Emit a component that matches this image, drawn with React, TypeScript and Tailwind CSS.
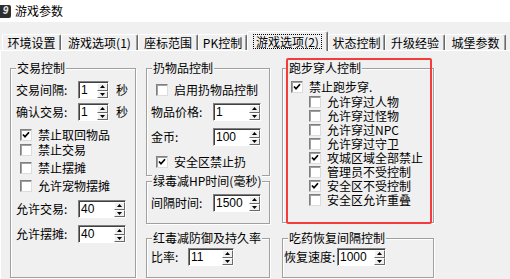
import type { ReactNode } from "react";

const Check = ({ checked }: { checked?: boolean }) => (
  <span className="w-[12px] h-[12px] shrink-0 bg-white border border-t-[#808080] border-l-[#808080] border-r-[#dcdcdc] border-b-[#dcdcdc] shadow-[inset_1px_1px_0_#a0a0a0] flex items-center justify-center">
    {checked && (
      <svg width="8" height="8" viewBox="0 0 8 8">
        <path d="M1 3.5 L3 5.8 L7 1.2" stroke="#000" strokeWidth="1.7" fill="none" />
      </svg>
    )}
  </span>
);

const CheckRow = ({
  label,
  checked,
  className,
}: {
  label: string;
  checked?: boolean;
  className: string;
}) => (
  <div className={`h-[14px] flex items-center ${className}`}>
    <Check checked={checked} />
    <span className="ml-[6px] leading-[14px] whitespace-nowrap">{label}</span>
  </div>
);

const Arrow = ({ up }: { up?: boolean }) => (
  <div className="flex-1 bg-[#f0f0f0] border border-t-white border-l-white border-r-[#696969] border-b-[#696969] flex items-center justify-center">
    <svg width="5" height="3" viewBox="0 0 5 3">
      <path d={up ? "M2.5 0 L5 3 L0 3 Z" : "M0 0 L5 0 L2.5 3 Z"} fill="#000" />
    </svg>
  </div>
);

const Spin = ({ value, w }: { value: string; w: string }) => (
  <div
    className={`${w} h-[18px] shrink-0 flex bg-white border border-t-[#808080] border-l-[#808080] border-r-white border-b-white shadow-[inset_1px_1px_0_#404040]`}
  >
    <div className="flex-1 pl-[2px] pt-[1px] leading-[15px] font-['Liberation_Sans',sans-serif] text-[12px]">
      {value}
    </div>
    <div className="w-[11px] flex flex-col pt-[1px]">
      <Arrow up />
      <Arrow />
    </div>
  </div>
);

const Group = ({
  title,
  className,
  children,
}: {
  title: string;
  className: string;
  children?: ReactNode;
}) => (
  <div
    className={`relative flex flex-col border border-[#a0a0a0] shadow-[inset_1px_1px_0_#fff,1px_1px_0_#fff] ${className}`}
  >
    <span className="absolute left-[5px] top-[-8px] px-[1px] bg-[#f0f0f0] leading-[14px] whitespace-nowrap">
      {title}
    </span>
    {children}
  </div>
);

const tabs = [
  { label: "环境设置", w: "w-[59px]" },
  { label: "游戏选项(1)", w: "w-[77px]" },
  { label: "座标范围", w: "w-[60px]" },
  { label: "PK控制", w: "w-[49px]" },
  { label: "游戏选项(2)", w: "w-[81px]", active: true },
  { label: "状态控制", w: "w-[57px]" },
  { label: "升级经验", w: "w-[60px]" },
  { label: "城堡参数", w: "w-[61px]" },
];

const runRows = [
  { label: "允许穿过人物" },
  { label: "允许穿过怪物" },
  { label: "允许穿过NPC" },
  { label: "允许穿过守卫" },
  { label: "攻城区域全部禁止", checked: true },
  { label: "管理员不受控制" },
  { label: "安全区不受控制", checked: true },
  { label: "安全区允许重叠" },
];

export default function App() {
  return (
    <div className="w-[510px] h-[279px] overflow-hidden bg-[#f0f0f0] text-[12px] text-black font-['Noto_Sans_CJK_SC','Noto_Sans',sans-serif]">
      <div className="h-[22px] bg-white flex items-center">
        <div className="w-[11px] h-[13px] bg-[#2e2e2e] rounded-r-[2px] flex items-center justify-center text-[10px] font-bold italic text-[#e8e8e8] font-['Liberation_Sans',sans-serif] leading-none">
          9
        </div>
        <span className="ml-[4px] text-[12px] leading-[14px]">游戏参数</span>
      </div>

      <div className="h-[28px] flex items-end pl-[2px]">
        {tabs.map((t) =>
          t.active ? (
            <div
              key={t.label}
              className={`${t.w} h-[20px] -mb-px relative z-10 bg-[#f0f0f0] border-t border-l border-white border-r border-r-[#696969] shadow-[inset_-1px_0_0_#a0a0a0] rounded-t-[2px] flex items-start justify-center pt-[2px]`}
            >
              <span className="border border-dotted border-black px-[2px] leading-[13px] whitespace-nowrap">
                {t.label}
              </span>
            </div>
          ) : (
            <div
              key={t.label}
              className={`${t.w} h-[16px] border-t border-l border-white border-r border-r-[#696969] shadow-[inset_-1px_0_0_#a0a0a0] rounded-t-[2px] flex items-center justify-center leading-[14px] whitespace-nowrap`}
            >
              {t.label}
            </div>
          )
        )}
      </div>

      <div className="h-[229px] border-t border-l border-white flex pl-[9px] pt-[17px]">
        <Group title="交易控制" className="w-[126px] h-[210px] shrink-0">
          <div className="mt-[12px] h-[18px] flex items-center">
            <span className="w-[67px] pl-[5px] whitespace-nowrap">交易间隔:</span>
            <Spin value="1" w="w-[31px]" />
            <span className="ml-[7px]">秒</span>
          </div>
          <div className="mt-[4px] h-[18px] flex items-center">
            <span className="w-[67px] pl-[5px] whitespace-nowrap">确认交易:</span>
            <Spin value="1" w="w-[31px]" />
            <span className="ml-[7px]">秒</span>
          </div>
          <CheckRow label="禁止取回物品" checked className="mt-[7px] pl-[9px]" />
          <CheckRow label="禁止交易" className="mt-[1px] pl-[9px]" />
          <CheckRow label="禁止摆摊" className="mt-[4px] pl-[9px]" />
          <CheckRow label="允许宠物摆摊" className="mt-[4px] pl-[9px]" />
          <div className="mt-[7px] h-[18px] flex items-center">
            <span className="w-[67px] pl-[5px] whitespace-nowrap">允许交易:</span>
            <Spin value="40" w="w-[48px]" />
          </div>
          <div className="mt-[7px] h-[18px] flex items-center">
            <span className="w-[67px] pl-[5px] whitespace-nowrap">允许摆摊:</span>
            <Spin value="40" w="w-[48px]" />
          </div>
        </Group>

        <div className="ml-[10px] w-[124px] shrink-0 flex flex-col">
          <Group title="扔物品控制" className="h-[108px]">
            <CheckRow label="启用扔物品控制" className="mt-[14px] pl-[9px]" />
            <div className="mt-[6px] h-[18px] flex items-center">
              <span className="w-[66px] pl-[4px] whitespace-nowrap">物品价格:</span>
              <Spin value="1" w="w-[48px]" />
            </div>
            <div className="mt-[7px] h-[18px] flex items-center">
              <span className="w-[66px] pl-[4px] whitespace-nowrap">金币:</span>
              <Spin value="100" w="w-[48px]" />
            </div>
            <CheckRow label="安全区禁止扔" checked className="mt-[9px] pl-[9px]" />
          </Group>
          <Group title="绿毒减HP时间(毫秒)" className="mt-[5px] h-[43px]">
            <div className="mt-[12px] h-[18px] flex items-center">
              <span className="w-[66px] pl-[4px] whitespace-nowrap">间隔时间:</span>
              <Spin value="1500" w="w-[48px]" />
            </div>
          </Group>
          <Group title="红毒减防御及持久率" className="mt-[14px] h-[40px]">
            <div className="mt-[9px] h-[18px] flex items-center">
              <span className="w-[41px] pl-[4px] whitespace-nowrap">比率:</span>
              <Spin value="11" w="w-[46px]" />
            </div>
          </Group>
        </div>

        <div className="ml-[12px] w-[152px] shrink-0 flex flex-col">
          <Group title="跑步穿人控制" className="h-[155px]">
            <div className="absolute left-[3px] top-[-11px] w-[146px] h-[166px] border-2 border-[#f43c3c] rounded-[2px] pointer-events-none" />
            <CheckRow label="禁止跑步穿." checked className="mt-[11px] pl-[8px]" />
            <div className="mt-[1px] flex flex-col">
              {runRows.map((r) => (
                <CheckRow key={r.label} label={r.label} checked={r.checked} className="pl-[26px]" />
              ))}
            </div>
          </Group>
          <Group title="吃药恢复间隔控制" className="mt-[15px] h-[40px]">
            <div className="mt-[9px] h-[18px] flex items-center">
              <span className="w-[54px] pl-[1px] whitespace-nowrap">恢复速度:</span>
              <Spin value="1000" w="w-[49px]" />
            </div>
          </Group>
        </div>
      </div>
    </div>
  );
}
